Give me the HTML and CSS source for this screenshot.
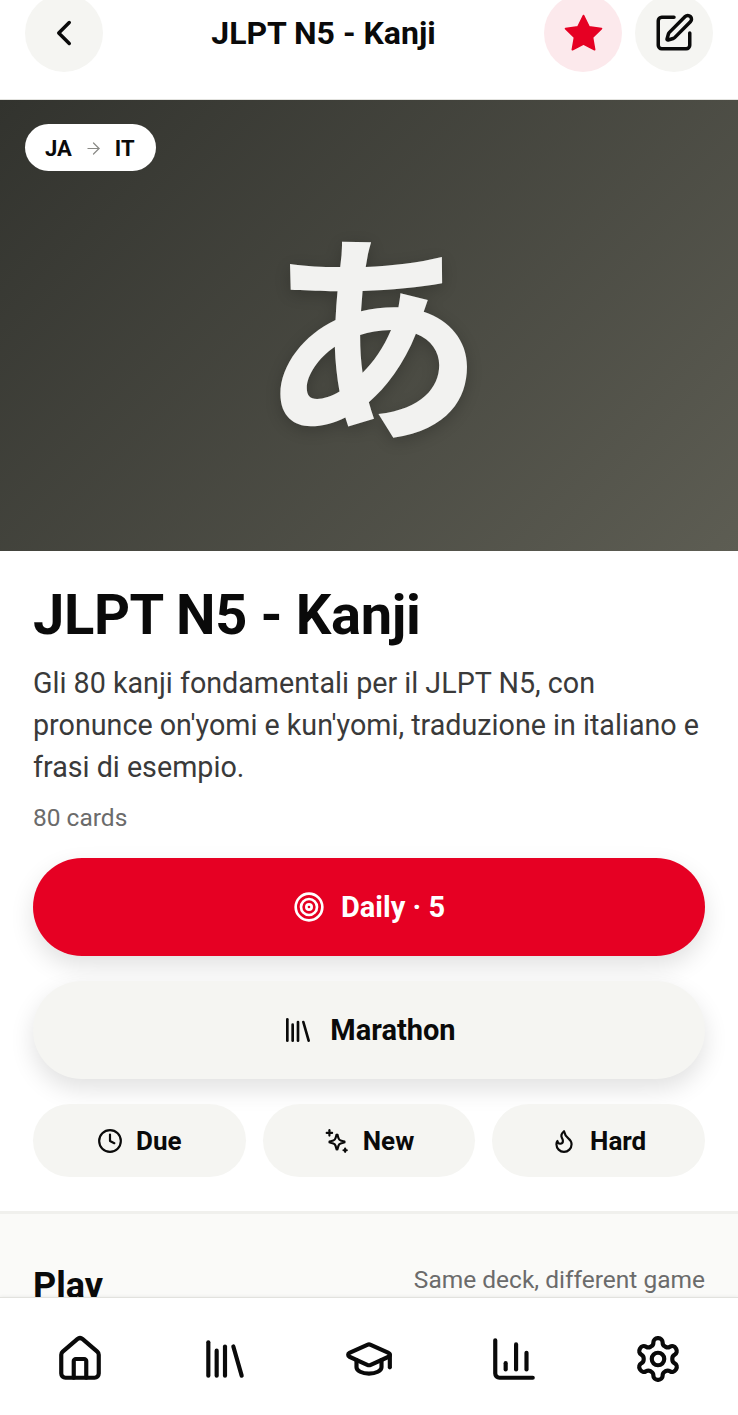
FILE: index.html
```html
<!DOCTYPE html>
<html lang="it">
<head>
  <meta charset="UTF-8">
  <meta name="viewport" content="width=device-width, initial-scale=1.0">
  <title>JLPT N5 - Kanji</title>
  <link rel="stylesheet" href="styles.css">
</head>
<body>
  <div class="page">
    <!-- Top bar -->
    <div class="header">
      <button class="round-btn">
        <svg class="icon icon-head" viewBox="0 0 24 24"><path d="m15 18-6-6 6-6"/></svg>
      </button>
      <h2>JLPT N5 - Kanji</h2>
      <div class="header-actions">
        <button class="round-btn round-btn-fav">
          <svg class="icon icon-star" viewBox="0 0 24 24"><polygon points="12 2 15.09 8.26 22 9.27 17 14.14 18.18 21.02 12 17.77 5.82 21.02 7 14.14 2 9.27 8.91 8.26"/></svg>
        </button>
        <button class="round-btn">
          <svg class="icon icon-head" viewBox="0 0 24 24"><path d="M12 3H5a2 2 0 0 0-2 2v14a2 2 0 0 0 2 2h14a2 2 0 0 0 2-2v-7"/><path d="M18.375 2.625a1 1 0 0 1 3 3l-9.013 9.014a2 2 0 0 1-.853.505l-2.873.84a.5.5 0 0 1-.62-.62l.84-2.873a2 2 0 0 1 .506-.852z"/></svg>
        </button>
      </div>
    </div>

    <!-- Deck cover -->
    <div class="cover">
      <div class="lang-pill">
        <span>JA</span>
        <svg class="lang-arrow" viewBox="0 0 24 24"><path d="M5 12h14"/><path d="m12 5 7 7-7 7"/></svg>
        <span>IT</span>
      </div>
      <span class="cover-glyph" lang="ja">あ</span>
    </div>

    <div class="deck-info">
      <h1>JLPT N5 - Kanji</h1>
      <p class="deck-desc">Gli 80 kanji fondamentali per il JLPT N5, con pronunce on'yomi e kun'yomi, traduzione in italiano e frasi di esempio.</p>
      <div class="deck-count">80 cards</div>

      <button class="big-btn big-btn-red">
        <svg class="icon icon-target" viewBox="0 0 24 24"><circle cx="12" cy="12" r="10"/><circle cx="12" cy="12" r="6"/><circle cx="12" cy="12" r="2"/></svg>
        Daily · 5
      </button>
      <button class="big-btn big-btn-grey">
        <svg class="icon icon-lib" viewBox="0 0 24 24"><path d="m16 6 4 14"/><path d="M12 6v14"/><path d="M8 8v12"/><path d="M4 4v16"/></svg>
        Marathon
      </button>

      <div class="mode-row">
        <button class="mode-btn">
          <svg class="icon icon-small" viewBox="0 0 24 24"><circle cx="12" cy="12" r="10"/><polyline points="12 6 12 12 16 14"/></svg>
          Due
        </button>
        <button class="mode-btn">
          <svg class="icon icon-small" viewBox="0 0 24 24"><path transform="translate(0.5 -1)" d="M11 7.5a.5.5 0 0 1 1 0l.9 3a3 3 0 0 0 2 2l3.1.9a.5.5 0 0 1 0 1l-3.1.9a3 3 0 0 0-2 2l-.9 3a.5.5 0 0 1-1 0l-.9-3a3 3 0 0 0-2-2L5 14.400a.5.5 0 0 1 0-1l3.100-.9a3 3 0 0 0 2-2z"/><path d="M5 2v5"/><path d="M2.500 4.500h5"/><path d="M19.500 19v3"/><path d="M18 20.500h3"/></svg>
          New
        </button>
        <button class="mode-btn">
          <svg class="icon icon-small" viewBox="0 0 24 24"><path d="M8.5 14.5A2.5 2.5 0 0 0 11 12c0-1.38-.5-2-1-3-1.072-2.143-.224-4.054 2-6 .5 2.500 2 4.900 4 6.500 2 1.600 3 3.500 3 5.500a7 7 0 1 1-14 0c0-1.153.433-2.294 1-3a2.500 2.500 0 0 0 2.500 2.500z"/></svg>
          Hard
        </button>
      </div>
    </div>

    <div class="play-section">
      <div class="play-head">
        <h3>Play</h3>
        <span>Same deck, different game</span>
      </div>
    </div>
  </div>

  <!-- Bottom navigation -->
  <div class="bottom-nav">
    <svg class="icon nav-icon" viewBox="0 0 24 24"><path d="M15 21v-8a1 1 0 0 0-1-1h-4a1 1 0 0 0-1 1v8"/><path d="M3 10a2 2 0 0 1 .709-1.528l7-5.999a2 2 0 0 1 2.582 0l7 5.999A2 2 0 0 1 21 10v9a2 2 0 0 1-2 2H5a2 2 0 0 1-2-2z"/></svg>
    <svg class="icon nav-icon" viewBox="0 0 24 24"><path d="m16 6 4 14"/><path d="M12 6v14"/><path d="M8 8v12"/><path d="M4 4v16"/></svg>
    <svg class="icon nav-icon" viewBox="0 0 24 24"><path d="M21.42 10.922a1 1 0 0 0-.019-1.838L12.830 5.180a2 2 0 0 0-1.660 0L2.600 9.080a1 1 0 0 0 0 1.832l8.570 3.908a2 2 0 0 0 1.660 0z"/><path d="M22 10v6"/><path d="M6 12.500V16a6 3 0 0 0 12 0v-3.500"/></svg>
    <svg class="icon nav-icon" viewBox="0 0 24 24"><path d="M3 3v16a2 2 0 0 0 2 2h16"/><path d="M18 17V9"/><path d="M13 17V5"/><path d="M8 17v-3"/></svg>
    <svg class="icon nav-icon" viewBox="0 0 24 24"><path d="M12.220 2h-.440a2 2 0 0 0-2 2v.180a2 2 0 0 1-1 1.730l-.430.250a2 2 0 0 1-2 0l-.150-.080a2 2 0 0 0-2.730.730l-.220.380a2 2 0 0 0 .730 2.730l.150.100a2 2 0 0 1 1 1.720v.510a2 2 0 0 1-1 1.740l-.150.090a2 2 0 0 0-.730 2.730l.220.380a2 2 0 0 0 2.730.730l.150-.080a2 2 0 0 1 2 0l.430.250a2 2 0 0 1 1 1.730V20a2 2 0 0 0 2 2h.440a2 2 0 0 0 2-2v-.180a2 2 0 0 1 1-1.730l.430-.250a2 2 0 0 1 2 0l.150.080a2 2 0 0 0 2.730-.730l.220-.390a2 2 0 0 0-.730-2.730l-.150-.080a2 2 0 0 1-1-1.740v-.500a2 2 0 0 1 1-1.740l.150-.090a2 2 0 0 0 .730-2.730l-.220-.380a2 2 0 0 0-2.730-.730l-.150.080a2 2 0 0 1-2 0l-.430-.250a2 2 0 0 1-1-1.730V4a2 2 0 0 0-2-2z"/><circle cx="12" cy="12" r="3"/></svg>
  </div>
</body>
</html>
```

FILE: styles.css
```css
html, body {
  height: 100%;
}

body {
  font-family: Roboto, 'Noto Sans', sans-serif;
  margin: 0;
  padding: 0;
  background-color: #fff;
  color: #0a0a0a;
  display: flex;
  flex-direction: column;
  overflow: hidden;
}

button {
  font-family: inherit;
  border: none;
  padding: 0;
  color: inherit;
}

.page {
  flex: 1;
  min-height: 0;
  overflow: hidden;
}

.icon {
  width: 36px;
  height: 36px;
  fill: none;
  stroke: currentColor;
  stroke-width: 2;
  stroke-linecap: round;
  stroke-linejoin: round;
  flex-shrink: 0;
}

/* Top bar - the row sits slightly scrolled past the top edge */
.header {
  display: flex;
  align-items: center;
  height: 78px;
  margin-top: -6px;
  padding: 0 25px 27px;
  border-bottom: 1px solid #e2e2de;
}

.header h2 {
  flex: 1;
  margin: 0;
  text-align: center;
  font-size: 32px;
  font-weight: 700;
}

.header-actions {
  display: flex;
  gap: 13px;
}

.round-btn {
  width: 78px;
  height: 78px;
  border-radius: 50%;
  background-color: #f5f5f2;
  display: flex;
  justify-content: center;
  align-items: center;
}

.round-btn-fav {
  background-color: #fce9ec;
  color: #e60023;
}

.icon-head {
  width: 42px;
  height: 42px;
}

.icon-star {
  width: 43px;
  height: 43px;
  fill: currentColor;
  stroke-width: 1;
}

/* Deck cover */
.cover {
  position: relative;
  height: 451px;
  background: linear-gradient(135deg, #32332e 0%, #5d5d53 100%);
  display: flex;
  justify-content: center;
  align-items: center;
}

.lang-pill {
  position: absolute;
  top: 24px;
  left: 25px;
  height: 47px;
  padding: 2px 21px 0 20px;
  box-sizing: border-box;
  border-radius: 24px;
  background-color: #fff;
  display: flex;
  align-items: center;
  gap: 12px;
  font-size: 22px;
  font-weight: 700;
}

.lang-arrow {
  width: 19px;
  height: 19px;
  fill: none;
  stroke: #8a8a86;
  stroke-width: 1.5;
  stroke-linecap: round;
  stroke-linejoin: round;
}

.cover-glyph {
  font-family: 'Noto Sans CJK JP', sans-serif;
  font-size: 224px;
  font-weight: 700;
  line-height: 1;
  padding-left: 6px;
  color: #f2f2f0;
  text-shadow: 0 4px 16px rgba(0, 0, 0, 0.2);
}

/* Deck title, description and actions */
.deck-info {
  padding: 29px 33px 34px;
}

.deck-info h1 {
  margin: 0;
  font-size: 56px;
  line-height: 70px;
  font-weight: 700;
  letter-spacing: -0.35px;
}

.deck-desc {
  margin: 12px 0 0;
  font-size: 28.7px;
  line-height: 42px;
  color: #3a3a3a;
}

.deck-count {
  margin-top: 14px;
  font-size: 24.5px;
  line-height: 32px;
  color: #6b6b6b;
}

.big-btn {
  width: 100%;
  height: 98px;
  border-radius: 49px;
  display: flex;
  justify-content: center;
  align-items: center;
  gap: 16px;
  font-size: 29px;
  font-weight: 700;
}

.big-btn-red {
  margin-top: 24px;
  background-color: #e60023;
  color: #fff;
  box-shadow: 0 10px 24px rgba(0, 0, 0, 0.12);
}

.big-btn-grey {
  margin-top: 25px;
  background-color: #f5f5f2;
  box-shadow: 0 10px 24px rgba(0, 0, 0, 0.12);
}

.icon-target {
  width: 32px;
  height: 32px;
}

.icon-lib {
  width: 32px;
  height: 32px;
}

.mode-row {
  margin-top: 25px;
  display: grid;
  grid-template-columns: repeat(3, 1fr);
  gap: 17px;
}

.mode-btn {
  height: 73px;
  border-radius: 37px;
  background-color: #f5f5f2;
  display: flex;
  justify-content: center;
  align-items: center;
  gap: 13px;
  font-size: 26px;
  font-weight: 700;
}

.icon-small {
  width: 26px;
  height: 26px;
}

/* Games section, cut off by the navigation */
.play-section {
  border-top: 3px solid #f0f0ed;
  background-color: #fafaf8;
  padding: 50px 33px 40px;
}

.play-head {
  display: flex;
  justify-content: space-between;
  align-items: flex-start;
}

.play-head h3 {
  margin: 0;
  font-size: 36px;
  line-height: 44px;
  font-weight: 700;
}

.play-head span {
  font-size: 24.5px;
  line-height: 32px;
  color: #6b6b6b;
}

/* Bottom navigation */
.bottom-nav {
  flex-shrink: 0;
  height: 118px;
  box-sizing: border-box;
  border-top: 1px solid #e2e2de;
  background-color: #fff;
  display: flex;
  justify-content: space-between;
  align-items: center;
  padding: 4px 55px 0;
  box-shadow: 0 -1px 3px rgba(0, 0, 0, 0.05);
}

.nav-icon {
  width: 50px;
  height: 50px;
}
```
